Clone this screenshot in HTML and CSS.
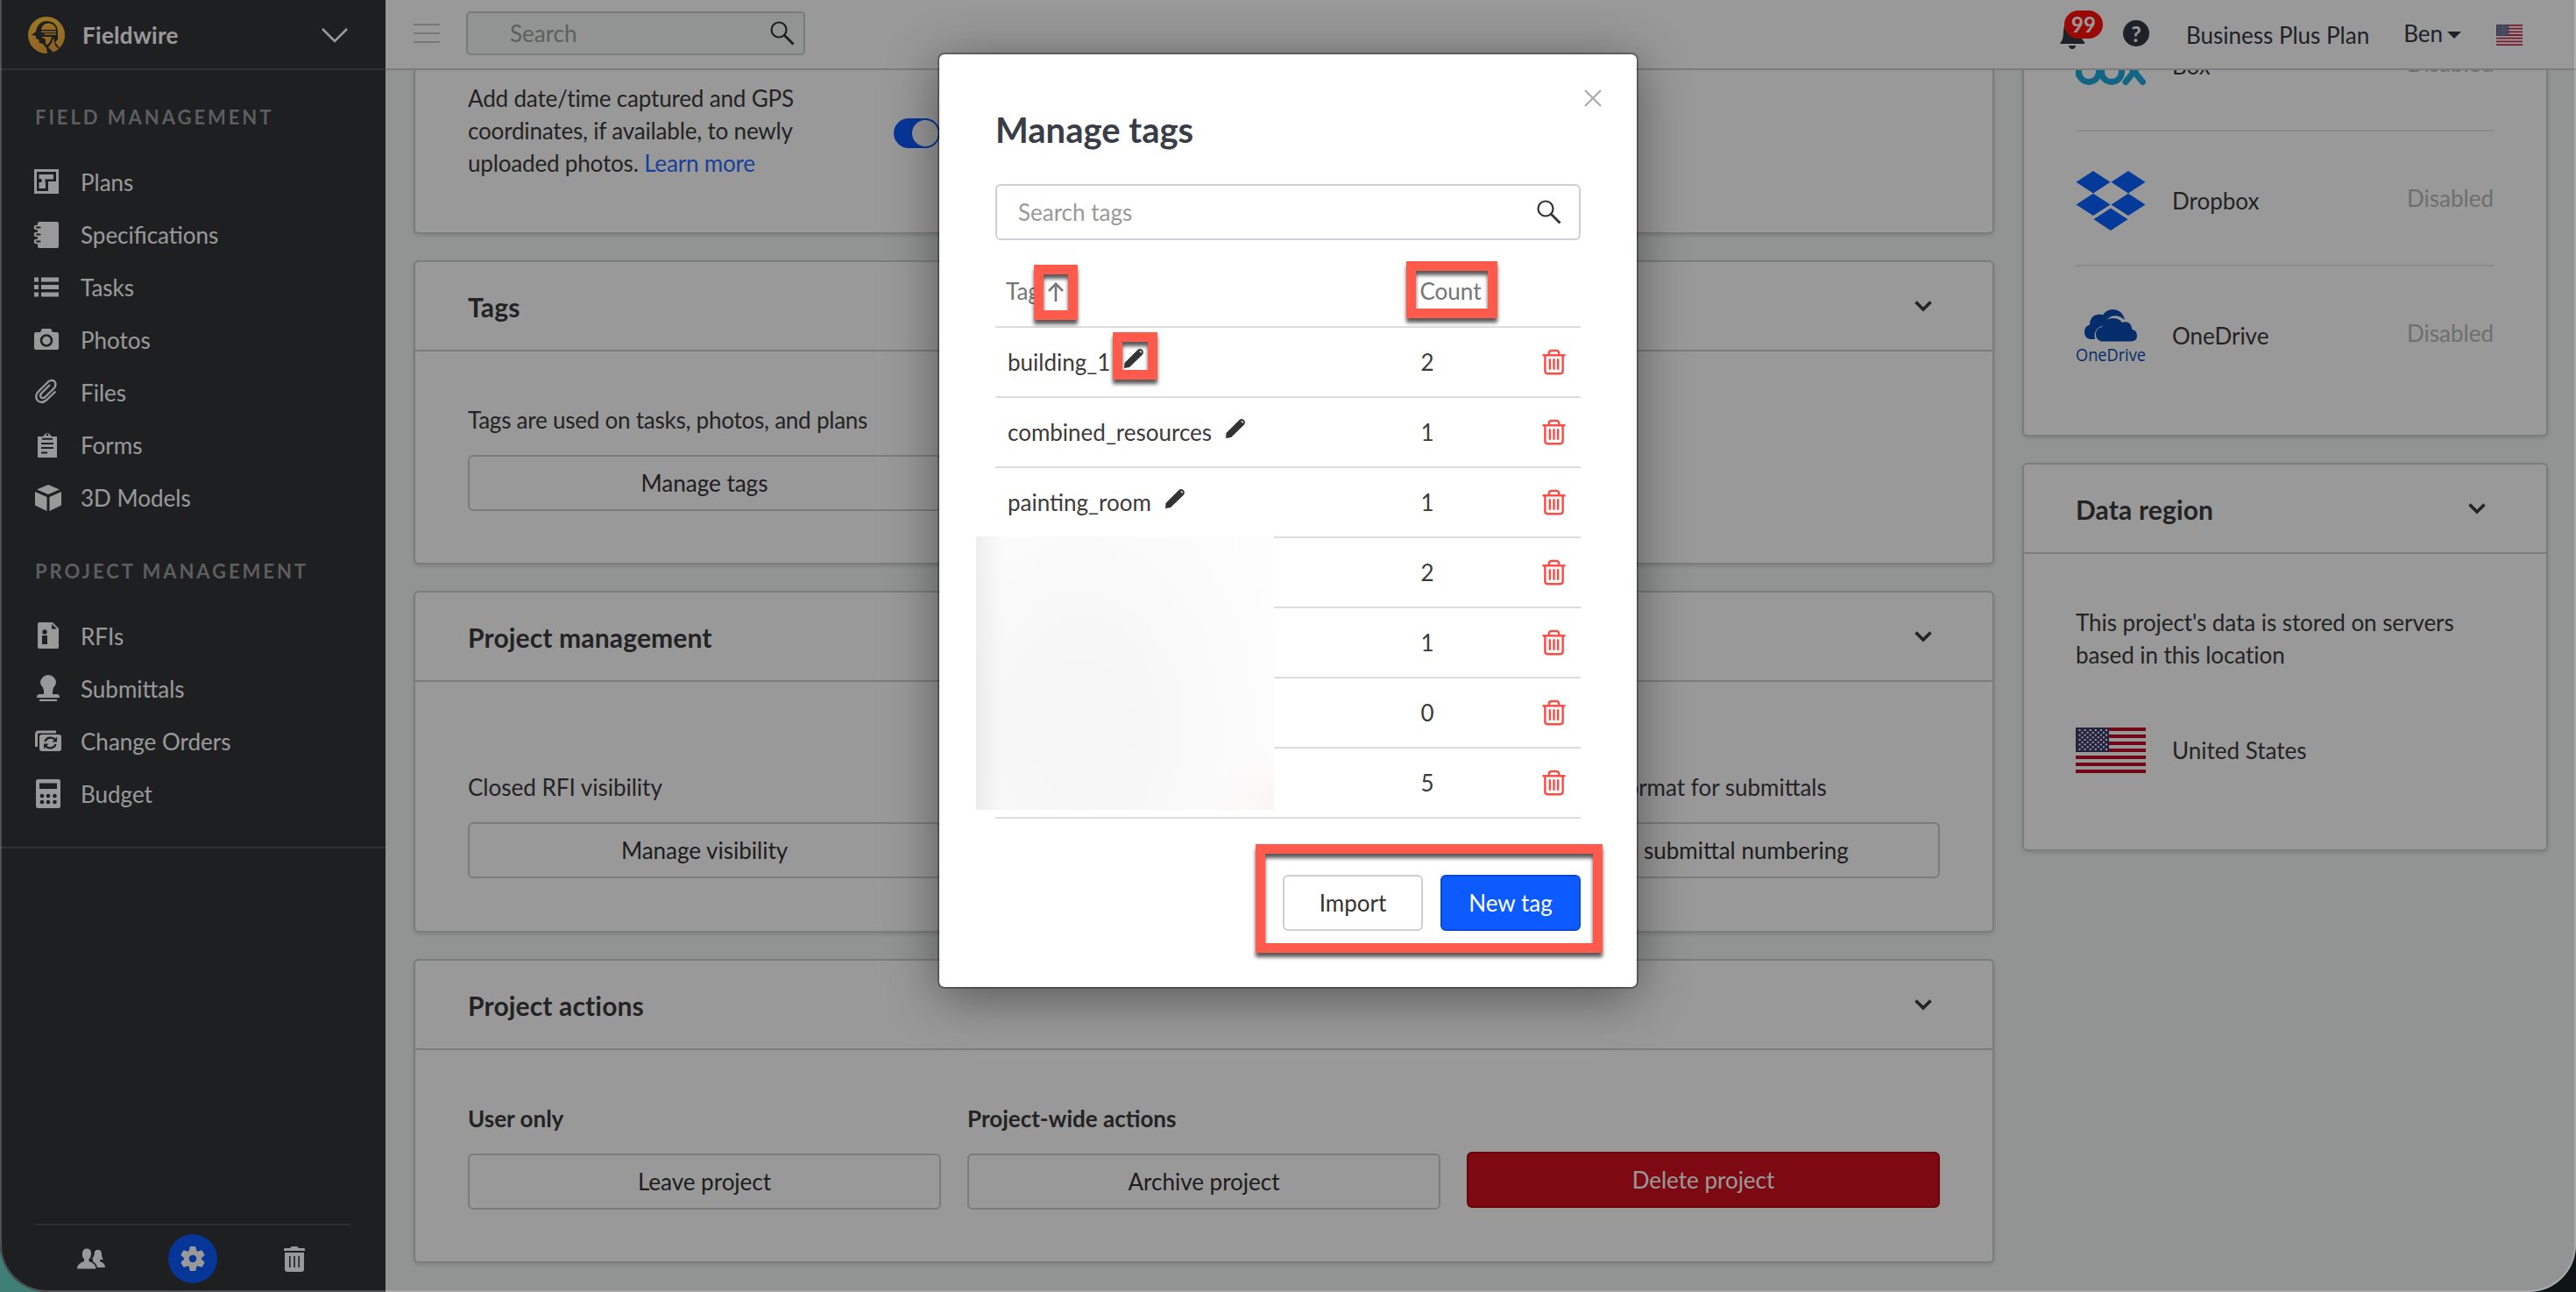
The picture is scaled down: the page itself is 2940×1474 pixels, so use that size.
FILE: index.html
```
<!DOCTYPE html>
<html lang="en">
<head>
  <meta charset="UTF-8" />
  <meta name="viewport" content="width=device-width, initial-scale=1.0" />
  <title>Fieldwire</title>
  <link rel="stylesheet" href="styles.css">
</head>
<body>
  <!-- shared icons -->
  <svg class="sprite" width="0" height="0">
    <symbol id="chevron" viewBox="0 0 20 13"><path d="M1.5 1.5 L10 10 L18.5 1.5" fill="none" stroke="currentColor" stroke-width="3.6" /></symbol>
    <symbol id="search" viewBox="0 0 28 28"><circle cx="10" cy="10" r="8.5" fill="none" stroke="currentColor" stroke-width="2.2" /><path d="M16.3 16.3 L26.5 26.5" stroke="currentColor" stroke-width="2.8" /></symbol>
    <symbol id="trash" viewBox="0 0 28 30"><g fill="none" stroke="currentColor" stroke-width="2.5"><path d="M.5 7 H27.5" /><path d="M8 6.5 V4.5 Q8.5 1.5 11 1.5 H17 Q19.5 1.5 20 4.5 V6.5" /><path d="M3.5 7 V26 Q3.5 28.700 6.500 28.700 H21.500 Q24.500 28.700 24.500 26 V7" /><path d="M9.200 11 V24 M14 11 V24 M18.800 11 V24" /></g></symbol>
    <symbol id="pencil" viewBox="0 0 24 24"><path d="M1 23 L1.5 17 L16.5 2 Q19 0 21.5 2 Q24 4.5 22 7.500 L7 22 Z M18.300 3.800 L20.300 5.800 L21.200 4.800 L19.300 2.900 Z" fill="currentColor" fill-rule="evenodd" /></symbol>
    <symbol id="flag" viewBox="0 0 80 52">
      <rect width="80" height="52" fill="#fff" />
      <path d="M0 2 H80 M0 10 H80 M0 18 H80 M0 26 H80 M0 34 H80 M0 42 H80 M0 50 H80" stroke="#bf0a2b" stroke-width="4" />
      <rect width="38" height="28" fill="#3c3b6e" />
      <path d="M3.5 3 H36 M3.5 8.5 H36 M3.5 14 H36 M3.5 19.5 H36 M3.5 25 H36" stroke="#fff" stroke-width="2" stroke-dasharray="2 4.1" />
      <path d="M6.5 5.7 H34 M6.5 11.2 H34 M6.5 16.7 H34 M6.5 22.2 H34" stroke="#fff" stroke-width="2" stroke-dasharray="2 4.1" />
    </symbol>
  </svg>

  <div class="window">
    <nav class="sidebar">
      <div class="brand">
        <svg class="logo" viewBox="0 0 42 42">
          <defs><linearGradient id="gold" x1="0" y1="0" x2="0" y2="1"><stop offset="0" stop-color="#ffc83b" /><stop offset="1" stop-color="#f5a63b" /></linearGradient></defs>
          <circle cx="21" cy="21" r="21" fill="url(#gold)" />
          <path d="M4 21 L9 17 Q11 5 22 5 Q34 6 34 18 V26 L31 29 L36 36 L28 42 H22 L21 36 L17 31 L13 30 L12 26 L9 25 V22 Z" fill="#323437" />
          <path d="M15 15 Q16 7.5 23.5 7.500 Q31 8 32 15 Z" fill="url(#gold)" />
          <path d="M15 17.300 H32 M19 20 H32" stroke="#f7b53b" stroke-width="1.500" />
          <path d="M15 23 H27 L25 29 L22 32 L20 31 L20 26 Z" fill="#f7ae3b" />
          <path d="M23 35 L27 30 L29 24 L31 33 L35 37 L29 40.500 Z" fill="#f5a63b" />
        </svg>
        <span class="brand-name">Fieldwire</span>
        <svg class="brand-arrow" viewBox="0 0 30 17"><path d="M1 1 L15 15 L29 1" fill="none" stroke="currentColor" stroke-width="2.6" /></svg>
      </div>

      <h2 class="nav-title">Field Management</h2>
      <ul class="nav-list">
        <li><svg viewBox="0 0 30 34"><path d="M-1 2 H27 V30 H-1 Z" fill="currentColor" /><path d="M2 5 H24 V16 H15 V27 H2 Z" fill="#323437" /><path d="M4.500 8 H21 V13.500 H11.500 V17 H12 V24 H4.500 V17 H7.500 V13 H4.500 Z" fill="currentColor" /></svg>Plans</li>
        <li><svg viewBox="0 0 30 34"><path d="M5 2 H25 Q27 2 27 4 V30 Q27 32 25 32 H5 Q3 32 3 30 V4 Q3 2 5 2 Z" fill="currentColor" /><path d="M6 8.500 H1.500 M6 16.500 H1.500 M6 24.500 H1.500" stroke="currentColor" stroke-width="5.500" stroke-linecap="round" /><path d="M5.500 8.500 H2 M5.500 16.500 H2 M5.500 24.500 H2" stroke="#323437" stroke-width="2.200" stroke-linecap="round" /></svg>Specifications</li>
        <li><svg viewBox="0 0 30 34"><path d="M-1 8 H4 M7 8 H27 M-1 16.500 H4 M7 16.500 H27 M-1 25 H4 M7 25 H27" stroke="currentColor" stroke-width="5" /></svg>Tasks</li>
        <li><svg viewBox="0 0 30 34"><path d="M1 8 H6 L8 4 H18 L20 8 H25 Q27 8 27 10 V26 Q27 28 25 28 H1 Q-1 28 -1 26 V10 Q-1 8 1 8 Z" fill="currentColor" /><circle cx="13" cy="17.500" r="6" fill="none" stroke="#323437" stroke-width="2.600" /></svg>Photos</li>
        <li><svg viewBox="0 0 30 34"><path d="M17 9 L7 19 Q5 22 7 23.500 Q9 25 11.500 23 L22 12.500 Q25 8 22 5 Q19 2.500 15 5.500 L3.500 17 Q-1 22.500 3 27 Q7.500 31 13 26.500 L23.500 16.500" transform="translate(0 -1)" fill="none" stroke="currentColor" stroke-width="2.300" /></svg>Files</li>
        <li><svg viewBox="0 0 30 34"><path d="M3 7 H8 Q10 7 11 4.500 Q14 1.500 17 4.500 Q18 7 20 7 H25 V31 H3 Z" fill="currentColor" /><circle cx="14" cy="5" r="1.300" fill="#323437" /><path d="M8 9.800 H20 M7 15 H21 M7 20 H21 M7 25.500 H14" stroke="#323437" stroke-width="2" /></svg>Forms</li>
        <li><svg viewBox="0 0 30 34"><path d="M15 2 L28 7.500 L15 13 L2 7.500 Z M0 10 L13.500 16 V32 L0 25.500 Z M30 10 L16.500 16 V32 L30 25.500 Z" fill="currentColor" /></svg>3D Models</li>
      </ul>

      <h2 class="nav-title">Project Management</h2>
      <ul class="nav-list">
        <li><svg viewBox="0 0 30 34"><path d="M5 1 H20 L27 8 V29 Q27 31 25 31 H5 Q3 31 3 29 V3 Q3 1 5 1 Z" fill="currentColor" /><path d="M19 3 V8.500 H25 Z M8 16 H14 V26 H8 Z" fill="#323437" /><circle cx="11" cy="12" r="2.700" fill="#323437" /></svg>RFIs</li>
        <li><svg viewBox="0 0 30 34"><path d="M15 1 A9 9 0 0 1 24 10 Q23.500 13 21 15.500 Q20 18 20 23 H25 Q28 23 28 27 H2 Q2 23 5 23 H10 Q10.500 18 9 15.500 Q6.500 13 6 10 A9 9 0 0 1 15 1 Z M5 28.800 H25 V31 H5 Z" fill="currentColor" /></svg>Submittals</li>
        <li><svg viewBox="0 0 30 34"><path d="M24 6 H4 Q1.500 6 1.500 9 V23" fill="none" stroke="currentColor" stroke-width="3" /><rect x="5" y="9" width="25" height="19" rx="3" fill="currentColor" /><path d="M11.500 17 A6.500 6 0 0 1 23 15 M23.500 20 A6.500 6 0 0 1 12 22" fill="none" stroke="#323437" stroke-width="2.200" /><path d="M25 11.500 V17.500 H19.500 Z M10 25.500 V19.500 H15.500 Z" fill="#323437" /></svg>Change Orders</li>
        <li><svg viewBox="0 0 30 34"><rect x="1" y="0" width="28" height="33" rx="2.500" fill="currentColor" /><path d="M5 4.500 H25 V11 H5 Z" fill="#323437" /><g fill="#323437"><circle cx="8" cy="19" r="2.300" /><circle cx="15" cy="19" r="2.300" /><circle cx="22.500" cy="19" r="2.300" /><circle cx="8" cy="26" r="2.300" /><circle cx="15" cy="26" r="2.300" /><circle cx="22.500" cy="26" r="2.300" /></g></svg>Budget</li>
      </ul>

      <div class="sidebar-footer">
        <svg class="people" viewBox="0 0 32 24"><path d="M20 4 Q22 1 25 2 Q28 2.500 28 7 Q28 11 30 13 H26 V15 Q32 17 32 22 H23 Q22 17 17.500 15 Q19.500 13 17 12 Q20 9 20 4 Z" fill="currentColor" /><path d="M11 .5 Q16 .5 16 6 Q16 10.500 13.500 12.500 V15 Q21.500 17.500 21.500 23.500 H0 Q0 17.500 8 15 V12.500 Q5.500 10 6 6 Q6 .5 11 .5 Z" fill="currentColor" /></svg>
        <span class="gear"><svg viewBox="0 0 28 28"><g fill="currentColor"><circle cx="14" cy="14" r="10" /><path d="M10.500 1 Q10.500 0 12 0 H16 Q17.500 0 17.500 1 L18.500 6 H9.500 Z" id="tooth" /><use href="#tooth" transform="rotate(60 14 14)" /><use href="#tooth" transform="rotate(120 14 14)" /><use href="#tooth" transform="rotate(180 14 14)" /><use href="#tooth" transform="rotate(240 14 14)" /><use href="#tooth" transform="rotate(300 14 14)" /></g><circle cx="14" cy="14" r="4.300" fill="#0d5bff" /></svg></span>
        <svg class="bin" viewBox="0 0 24 29"><path d="M1 2 H7 Q8 0 10 0 H14 Q16 0 17 2 H23 Q24 2 24 3.500 V5 H0 V3.500 Q0 2 1 2 Z M1 7 H23 V26 Q23 29 20 29 H4 Q1 29 1 26 Z M6 11 V24 H7.600 V11 Z M11.200 11 V24 H12.800 V11 Z M16.400 11 V24 H18 V11 Z" fill="currentColor" fill-rule="evenodd" /></svg>
      </div>
    </nav>

    <div class="page">
      <header class="topbar">
        <div class="burger"><span></span><span></span><span></span></div>
        <div class="search-box"><span>Search</span><svg><use href="#search" /></svg></div>
        <div class="topbar-right">
          <div class="bell">
            <svg viewBox="0 0 29 36"><path d="M14 0 Q24 2 24 16 Q24 25 28 28 Q29 30 27 30 H1 Q-.500 30 1 28 Q4 25 4 16 Q5 2 14 0 Z M10 32 H18 Q17.500 36 14 36 Q10.500 36 10 32 Z" fill="currentColor" /></svg>
            <span class="badge">99</span>
          </div>
          <span class="help">?</span>
          <span class="plan">Business Plus Plan</span>
          <span class="user">Ben<i class="caret"></i></span>
          <svg class="flag-small" viewBox="0 0 80 52" preserveAspectRatio="none"><use href="#flag" /></svg>
        </div>
      </header>

      <main>
        <section class="column">
          <div class="card card-photos">
            <p>Add date/time captured and GPS<br />coordinates, if available, to newly<br />uploaded photos. <a href="#">Learn more</a></p>
            <span class="toggle"></span>
          </div>

          <div class="card">
            <div class="card-head"><h3>Tags</h3><svg><use href="#chevron" /></svg></div>
            <div class="card-body">
              <div><label class="tight">Tags are used on tasks, photos, and plans</label><button class="btn">Manage tags</button></div>
            </div>
          </div>

          <div class="card">
            <div class="card-head"><h3>Project management</h3><svg><use href="#chevron" /></svg></div>
            <div class="card-body tall">
              <div><label>Closed RFI visibility</label><button class="btn">Manage visibility</button></div>
              <div></div>
              <div><label>Set numbering format for submittals</label><button class="btn">Manage submittal numbering</button></div>
            </div>
          </div>

          <div class="card">
            <div class="card-head"><h3>Project actions</h3><svg><use href="#chevron" /></svg></div>
            <div class="card-body">
              <div><label class="bold">User only</label><button class="btn">Leave project</button></div>
              <div><label class="bold">Project-wide actions</label><button class="btn">Archive project</button></div>
              <div class="danger-cell"><button class="btn btn-danger">Delete project</button></div>
            </div>
          </div>
        </section>

        <aside class="column-right">
          <div class="card card-apps">
            <div class="app">
              <div class="app-name"><svg viewBox="0 0 80 60"><g fill="none" stroke="#1ea9dc" stroke-width="7" stroke-linecap="round"><path d="M3.500 4 V40" /><circle cx="15" cy="37" r="11.500" /><circle cx="41" cy="37" r="11.500" /><path d="M57 48.500 L76 25 M76.500 48.500 L57 25" /></g></svg><span>Box</span></div>
              <span class="status">Disabled</span>
            </div>
            <div class="app">
              <div class="app-name"><svg viewBox="0 0 80 68"><path d="M20 0 L39.500 12.700 L20 25.400 L.5 12.700 Z M60 0 L79.500 12.700 L60 25.400 L40.500 12.700 Z M20 25.800 L39.500 38.500 L20 51 L.5 38.500 Z M60 25.800 L79.500 38.500 L60 51 L40.500 38.500 Z M40 42.500 L59.500 55.200 L40 68 L20.500 55.200 Z" fill="#0761ff" /></svg><span>Dropbox</span></div>
              <span class="status">Disabled</span>
            </div>
            <div class="app">
              <div class="app-name"><svg viewBox="0 0 80 60"><path d="M22 34 H17 A8.500 8.500 0 0 1 16 17.500 Q16 7 25 6 Q28 5 31 6.500 Q35 0 42 0 Q53 0 56 12 Q44 2 34 13 Q30 17 30 19 Q20 22 22 34 Z" fill="#094ab2" /><path d="M29 36.500 A8.500 8.500 0 0 1 30 20 Q31 10 42 10 Q50 10 53 15 Q63 12 64.500 23 Q70 24 70 30 Q70 36.500 63 36.500 Z" fill="#094ab2" /><text x="0" y="58.500" textLength="80" lengthAdjust="spacingAndGlyphs" class="onedrive-text">OneDrive</text></svg><span>OneDrive</span></div>
              <span class="status">Disabled</span>
            </div>
          </div>

          <div class="card">
            <div class="card-head"><h3>Data region</h3><svg><use href="#chevron" /></svg></div>
            <div class="region">
              <p>This project's data is stored on servers<br />based in this location</p>
              <div class="country"><svg><use href="#flag" /></svg><span>United States</span></div>
            </div>
          </div>
        </aside>
      </main>
    </div>

    <div class="overlay"></div>
    <div class="frame"></div>
  </div>

  <div class="modal">
    <svg class="close" viewBox="0 0 20 20"><path d="M1 1 L19 19 M19 1 L1 19" stroke="currentColor" stroke-width="2" /></svg>
    <h1>Manage tags</h1>
    <div class="tag-search"><span>Search tags</span><svg><use href="#search" /></svg></div>
    <div class="row row-head">
      <span class="tag">Tag <svg class="sort" viewBox="0 0 18 22"><path d="M9 22 V2 M1 10 L9 1.8 L17 10" fill="none" stroke="currentColor" stroke-width="2.6" /></svg></span>
      <span class="count">Count</span>
    </div>
    <div class="row"><span class="tag">building_1<svg><use href="#pencil" /></svg></span><span class="count">2</span><svg class="del"><use href="#trash" /></svg></div>
    <div class="row"><span class="tag">combined_resources<svg><use href="#pencil" /></svg></span><span class="count">1</span><svg class="del"><use href="#trash" /></svg></div>
    <div class="row"><span class="tag">painting_room<svg><use href="#pencil" /></svg></span><span class="count">1</span><svg class="del"><use href="#trash" /></svg></div>
    <div class="row"><span class="tag"></span><span class="count">2</span><svg class="del"><use href="#trash" /></svg></div>
    <div class="row"><span class="tag"></span><span class="count">1</span><svg class="del"><use href="#trash" /></svg></div>
    <div class="row"><span class="tag"></span><span class="count">0</span><svg class="del"><use href="#trash" /></svg></div>
    <div class="row"><span class="tag"></span><span class="count">5</span><svg class="del"><use href="#trash" /></svg></div>
    <div class="modal-footer">
      <button class="btn">Import</button>
      <button class="btn btn-primary">New tag</button>
    </div>

    <div class="redacted"></div>
    <div class="mark mark-sort"></div>
    <div class="mark mark-count"></div>
    <div class="mark mark-edit"></div>
    <div class="mark mark-buttons"></div>
  </div>
</body>
</html>
```

FILE: styles.css
```
* {
  box-sizing: border-box;
}

body {
  margin: 0;
  width: 2940px;
  height: 1474px;
  overflow: hidden;
  background: linear-gradient(90deg, #3f7f76 0, #3f7f76 100px, #0f1516 101px);
  color: #3b3b3b;
  font-family: Lato, sans-serif;
  font-size: 26px;
  line-height: 37px;
}

h1, h2, h3, p, ul {
  margin: 0;
  padding: 0;
}

.sprite {
  position: absolute;
}

.window {
  position: relative;
  display: flex;
  height: 1474px;
  border-radius: 0 0 54px 54px;
  overflow: hidden;
}

.overlay, .frame {
  position: absolute;
  inset: 0;
}

.overlay {
  background: rgba(0, 0, 0, 0.4);
}

.frame {
  top: -4px;
  border: 2px solid rgba(255, 255, 255, 0.22);
  border-radius: 0 0 54px 54px;
}

/* sidebar */
.sidebar {
  width: 440px;
  display: flex;
  flex-direction: column;
  background: #323437;
  color: #fff;
}

.brand {
  height: 80px;
  display: flex;
  align-items: center;
  padding: 2px 43px 0 32px;
  border-bottom: 2px solid #505254;
}

.logo {
  width: 42px;
  height: 42px;
}

.brand-name {
  margin-left: 20px;
  font-weight: bold;
  letter-spacing: 0.3px;
}

.brand-arrow {
  width: 30px;
  height: 17px;
  margin-left: auto;
}

.nav-title {
  padding: 39px 40px 29px;
  color: #9a9b9d;
  font-size: 22px;
  line-height: 30px;
  letter-spacing: 2.95px;
  text-transform: uppercase;
}

.nav-list {
  list-style: none;
}

.nav-list li {
  height: 60px;
  display: flex;
  align-items: center;
  gap: 22px;
  padding-left: 40px;
}

.nav-list svg {
  width: 30px;
  height: 34px;
  overflow: visible;
}

.nav-list:last-of-type {
  padding-bottom: 30px;
  border-bottom: 2px solid #505254;
}

.sidebar-footer {
  margin: auto 40px 0;
  height: 78px;
  display: flex;
  align-items: center;
  border-top: 2px solid #4b4c50;
  padding: 2px 52px 2px 48px;
  justify-content: space-between;
}

.people {
  width: 32px;
  height: 24px;
}

.bin {
  width: 24px;
  height: 29px;
}

.gear {
  width: 56px;
  height: 56px;
  display: flex;
  align-items: center;
  justify-content: center;
  border-radius: 50%;
  background: #0d5bff;
  margin-right: 4px;
}

.gear svg {
  width: 28px;
  height: 28px;
}

/* top bar */
.page {
  flex: 1;
  display: flex;
  flex-direction: column;
  background: #f3f6f5;
}

.topbar {
  height: 80px;
  flex: none;
  display: flex;
  align-items: center;
  padding: 0 61px 2px 32px;
  background: #fff;
  border-bottom: 2px solid #cfcfd0;
}

.burger {
  display: flex;
  flex-direction: column;
  gap: 8px;
}

.burger span {
  width: 30px;
  height: 2px;
  background: #c8c8c8;
}

.search-box {
  width: 387px;
  height: 50px;
  margin-left: 30px;
  display: flex;
  align-items: center;
  justify-content: space-between;
  padding: 0 10px 0 48px;
  border: 2px solid #ccc;
  border-radius: 5px;
  background: #f3f6f5;
  color: #9d9f9e;
}

.search-box svg {
  width: 28px;
  height: 28px;
  color: #333;
}

.topbar-right {
  margin-left: auto;
  display: flex;
  align-items: center;
  color: #333842;
}

.bell {
  position: relative;
  width: 29px;
  height: 36px;
  margin-right: 43px;
}

.bell svg {
  width: 29px;
  height: 36px;
}

.badge {
  position: absolute;
  left: 5px;
  top: -8px;
  width: 44px;
  height: 32px;
  border-radius: 16px;
  background: #ff0f0a;
  color: #fff;
  font-size: 24px;
  font-weight: bold;
  line-height: 32px;
  text-align: center;
}

.help {
  width: 30px;
  height: 30px;
  border-radius: 50%;
  background: #333842;
  color: #fff;
  font-size: 25px;
  font-weight: bold;
  line-height: 30px;
  text-align: center;
}

.plan {
  margin: 4px 39px 0 42px;
}

.user {
  display: flex;
  align-items: center;
  gap: 5px;
}

.caret {
  border: 8px solid transparent;
  border-top-color: #333842;
  border-bottom: 0;
  margin-top: 3px;
}

.flag-small {
  width: 30px;
  height: 24px;
  margin: 4px 0 0 40px;
  opacity: 0.85;
}

/* content */
main {
  flex: 1;
  display: flex;
  gap: 32px;
  padding: 0 32px;
  overflow: hidden;
}

.column {
  width: 1804px;
}

.column-right {
  width: 600px;
}

.card {
  margin-bottom: 30px;
  background: #fff;
  border: 2px solid #cfcfd2;
  border-radius: 6px;
  box-shadow: 0 2px 4px rgba(0, 0, 0, 0.12);
}

.card-head {
  height: 102px;
  display: flex;
  align-items: center;
  justify-content: space-between;
  padding: 3px 69px 0 60px;
  border-bottom: 2px solid #cfcfd2;
}

.column-right .card-head {
  padding-left: 59px;
}

.card-head h3 {
  font-size: 30px;
  letter-spacing: 0.15px;
}

.card-head svg {
  width: 20px;
  height: 13px;
  margin-top: -3px;
}

.card-body {
  display: grid;
  grid-template-columns: repeat(3, 540px);
  gap: 30px;
  padding: 60px 60px 59px;
}

.card-body.tall {
  padding: 102px 60px 60px;
}

.card-body label {
  display: block;
  margin-bottom: 21px;
}

.card-body .tight {
  letter-spacing: -0.23px;
}

.bold {
  font-weight: bold;
}

.danger-cell {
  padding-top: 56px;
}

.btn {
  width: 100%;
  height: 64px;
  display: block;
  padding: 0;
  border: 2px solid #cfcfd2;
  border-radius: 6px;
  background: #fff;
  color: #333;
  font: inherit;
}

.btn-danger {
  background: #d0111e;
  border-color: #b00610;
  color: #fff;
}

.btn-primary {
  background: #0d5bff;
  border-color: #0a48d8;
  color: #fff;
}

.card-photos {
  height: 187px;
  display: flex;
  padding: 14px 60px 0;
  border-top: 0;
  border-radius: 0 0 6px 6px;
}

.card-photos p {
  width: 486px;
  letter-spacing: -0.17px;
}

.card-photos a {
  color: #2b6bff;
  text-decoration: none;
}

.toggle {
  width: 53px;
  height: 34px;
  margin-top: 41px;
  border-radius: 17px;
  background: radial-gradient(circle at 36px 17px, #fff 14.5px, #0d5bff 15.5px);
}

.card-apps {
  display: flow-root;
  height: 418px;
  padding: 0 60px 0 59px;
  border-top: 0;
  border-radius: 0 0 6px 6px;
}

.app {
  height: 154px;
  display: flex;
  align-items: center;
  justify-content: space-between;
  border-bottom: 2px solid #e8e8ea;
}

.app:first-child {
  margin-top: -84px;
}

.app:last-child {
  border-bottom-color: transparent;
}

.app-name {
  display: flex;
  align-items: center;
  gap: 30px;
  padding-top: 6px;
}

.app-name svg {
  width: 80px;
}

.onedrive-text {
  fill: #094ab2;
  font-family: "Open Sans", sans-serif;
  font-size: 20px;
}

.status {
  color: #bababa;
}

.region {
  height: 337px;
  padding: 60px 60px 0 59px;
}

.region p {
  letter-spacing: -0.06px;
}

.country {
  display: flex;
  align-items: center;
  gap: 30px;
  margin-top: 64px;
}

.country svg {
  width: 80px;
  height: 52px;
}

/* modal */
.modal {
  position: absolute;
  left: 1072px;
  top: 62px;
  width: 796px;
  height: 1064px;
  padding: 64px;
  border-radius: 6px;
  background: #fff;
  box-shadow: 0 0 0 2px rgba(0, 0, 0, 0.3), 0 10px 60px rgba(0, 0, 0, 0.45);
}

.modal h1 {
  margin-bottom: 40px;
  color: #383d48;
  font-size: 40px;
  line-height: 44px;
}

.close {
  position: absolute;
  left: 736px;
  top: 40px;
  width: 20px;
  height: 20px;
  color: #a8a8a8;
}

.tag-search {
  height: 64px;
  display: flex;
  align-items: center;
  justify-content: space-between;
  padding: 0 20px 0 24px;
  border: 2px solid #cfcfd6;
  border-radius: 6px;
  color: #999;
}

.tag-search svg {
  width: 28px;
  height: 28px;
  color: #333;
}

.row {
  height: 80px;
  display: flex;
  align-items: center;
  padding-left: 14px;
  border-bottom: 2px solid #dcdcdd;
}

.row-head {
  height: 100px;
  padding: 19px 0 0 12px;
  color: #757575;
}

.tag {
  width: 431px;
  display: flex;
  align-items: center;
}

.tag svg {
  width: 24px;
  height: 24px;
  margin: -9px 0 0 15px;
  color: #333;
}

.tag .sort {
  width: 18px;
  height: 22px;
  margin: 0 0 0 9px;
  color: #757575;
}

.count {
  width: 96px;
  text-align: center;
}

.row-head .count {
  width: 153px;
}

.del {
  width: 27px;
  height: 30px;
  margin: 0 17px 0 auto;
  color: #fb4b44;
}

.modal-footer {
  display: flex;
  justify-content: flex-end;
  gap: 20px;
  margin-top: 64px;
}

.modal-footer .btn {
  width: 160px;
}

/* hides the private tag names */
.redacted {
  position: absolute;
  left: 42px;
  top: 550px;
  width: 340px;
  height: 312px;
  background:
    linear-gradient(90deg, rgba(0, 0, 0, 0.05), transparent 30px),
    radial-gradient(circle at 100% 100%, #fbf5f4, rgba(255, 255, 255, 0) 70px),
    radial-gradient(ellipse 240px 330px at 120px 220px, #f6f6f6 20%, #fdfdfd 100%);
}

/* callout boxes */
.mark {
  position: absolute;
  border: 11px solid #ff5a4c;
  filter: drop-shadow(0 5px 2px rgba(0, 0, 0, 0.65));
}

.mark-sort {
  left: 108px;
  top: 240px;
  width: 50px;
  height: 63px;
}

.mark-count {
  left: 533px;
  top: 236px;
  width: 104px;
  height: 65px;
}

.mark-edit {
  left: 198px;
  top: 317px;
  width: 51px;
  height: 54px;
}

.mark-buttons {
  left: 361px;
  top: 901px;
  width: 396px;
  height: 124px;
}
```
